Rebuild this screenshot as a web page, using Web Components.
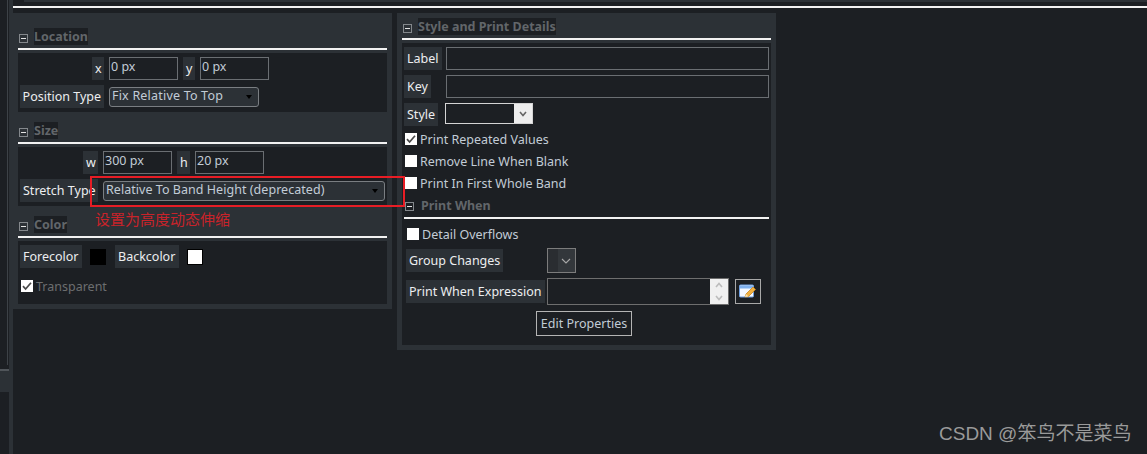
<!DOCTYPE html>
<html lang="en">
<head>
<meta charset="utf-8">
<title>Element properties</title>
<style>
html, body { margin: 0; padding: 0; height: 100%; background: #1c1f23; overflow: hidden; }
</style>
</head>
<body>
<props-page>
  <props-panel style="height:296px;width:379px;padding-top:15px">
    <props-section heading="Location">
      <field-row lead="84px">
        <field-label slot="lead" style="width:12px">x</field-label>
        <text-box value="0 px"></text-box>
        <field-label style="width:12px">y</field-label>
        <text-box value="0 px"></text-box>
      </field-row>
      <field-row lead="84px">
        <field-label slot="lead">Position Type</field-label>
        <drop-box value="Fix Relative To Top" style="width:150px;letter-spacing:0.2px"></drop-box>
      </field-row>
    </props-section>
    <props-section heading="Size" style="margin-top:10px">
      <field-row lead="78px">
        <field-label slot="lead" style="width:15px">w</field-label>
        <text-box value="300 px"></text-box>
        <field-label style="width:13px">h</field-label>
        <text-box value="20 px"></text-box>
      </field-row>
      <field-row lead="78px">
        <field-label slot="lead" style="width:78px">Stretch Type</field-label>
        <drop-box value="Relative To Band Height (deprecated)" style="width:282px;letter-spacing:0.04px"></drop-box>
      </field-row>
    </props-section>
    <props-section heading="Color" style="margin-top:10px">
      <color-row></color-row>
    </props-section>
  </props-panel>
  <props-panel style="height:337px;width:379px;padding-top:5px">
    <props-section heading="Style and Print Details">
      <style-details></style-details>
    </props-section>
  </props-panel>
</props-page>

<script>
"use strict";

const UI_FONT = `"Noto Sans", "Liberation Sans", sans-serif`;

class PropsPage extends HTMLElement {
  constructor() {
    super();
    this.attachShadow({ mode: "open" }).innerHTML = `
<style>
:host {
    display: flex;
    position: relative;
    width: 1147px;
    height: 454px;
    overflow: hidden;
    background: #1c1f23;
    font: 12.5px ${UI_FONT};
}
.rail { display: flex; flex: none; width: 13px; }
.tabs { width: 9px; display: flex; flex-direction: column; }
.tabs .list { height: 365px; width: 8px; box-sizing: border-box; border-right: 1px solid #3d4247; }
.tabs .sep { margin-top: 4px; height: 2px; background: #50555a; }
.tabs .tab { height: 21px; background: #2c3136; }
.strip { width: 4px; background: #2c3136; }
.main { flex: 1; display: flex; flex-direction: column; }
.top { height: 13px; flex: none; box-sizing: border-box; padding-top: 6px; position: relative; }
.top hr { margin: 0; border: 0; height: 2px; background: #f2f2f2; }
.top::before { content: ""; position: absolute; left: 11px; right: 0; top: 0; height: 2px; background: #2c3136; }
.panels { display: flex; gap: 5px; align-items: flex-start; }
.box {
    position: absolute;
    left: 90px;
    top: 176px;
    width: 315px;
    height: 31px;
    box-sizing: border-box;
    border: 2px solid #e81d25;
}
.note {
    position: absolute;
    left: 95px;
    top: 209px;
    color: #c8232a;
    font: 15px/20px "Noto Sans CJK SC", sans-serif;
}
.mark {
    position: absolute;
    left: 939px;
    top: 421px;
    color: #9a9a9a;
    font: 19px/26px "Liberation Sans", "Noto Sans CJK SC", sans-serif;
    white-space: nowrap;
}
</style>
<div class="rail">
  <div class="tabs"><div class="list"></div><div class="sep"></div><div class="tab"></div></div>
  <div class="strip"></div>
</div>
<div class="main">
  <div class="top"><hr></div>
  <div class="panels"><slot></slot></div>
</div>
<div class="box"></div>
<div class="note">设置为高度动态伸缩</div>
<div class="mark">CSDN @笨鸟不是菜鸟</div>`;
  }
}
customElements.define("props-page", PropsPage);

//===================================================

class PropsPanel extends HTMLElement {
  constructor() {
    super();
    this.attachShadow({ mode: "open" }).innerHTML = `
<style>
:host {
    display: block;
    flex: none;
    box-sizing: border-box;
    background: #2c3136;
    padding: 0 5px 5px;
}
</style>
<slot></slot>`;
  }
}
customElements.define("props-panel", PropsPanel);

//===================================================

class SectionHead extends HTMLElement {
  constructor() {
    super();
    const plain = this.hasAttribute("plain");
    this.attachShadow({ mode: "open" }).innerHTML = `
<style>
:host { display: block; }
.head { display: flex; height: 17px; align-items: flex-end; padding-left: 1px; }
.toggle {
    width: 9px;
    height: 9px;
    box-sizing: border-box;
    border: 1px solid #84888c;
    margin: 0 ${plain ? 7 : 6}px ${plain ? 3 : 2}px 0;
    display: flex;
    align-items: center;
    justify-content: center;
}
.toggle::before { content: ""; width: 5px; height: 1px; background: #e4e4e4; }
.title {
    height: 17px;
    line-height: 18px;
    font-size: 12.5px;
    font-weight: bold;
    color: #62666a;
    background: ${plain ? "transparent" : "#1c1f23"};
    white-space: nowrap;
}
hr { margin: 3px 0 3px; border: 0; height: 2px; background: #f2f2f2; }
</style>
<div class="head"><span class="toggle"></span><span class="title">${this.getAttribute("heading")}</span></div>
<hr>`;
  }
}
customElements.define("section-head", SectionHead);

class PropsSection extends HTMLElement {
  constructor() {
    super();
    this.attachShadow({ mode: "open" }).innerHTML = `
<style>
:host { display: block; }
.body {
    background: #1c1f23;
    padding: 4px 2px;
    display: flex;
    flex-direction: column;
    gap: 5px;
}
</style>
<section-head heading="${this.getAttribute("heading")}"></section-head>
<div class="body"><slot></slot></div>`;
  }
}
customElements.define("props-section", PropsSection);

//===================================================

class FieldRow extends HTMLElement {
  constructor() {
    super();
    this.attachShadow({ mode: "open" }).innerHTML = `
<style>
:host { display: flex; gap: 5px; align-items: center; height: 23px; }
.lead { display: flex; justify-content: flex-end; flex: none; width: ${this.getAttribute("lead")}; }
</style>
<div class="lead"><slot name="lead"></slot></div>
<slot></slot>`;
  }
}
customElements.define("field-row", FieldRow);

class FieldLabel extends HTMLElement {
  constructor() {
    super();
    this.attachShadow({ mode: "open" }).innerHTML = `
<style>
:host {
    display: block;
    flex: none;
    box-sizing: border-box;
    height: 23px;
    line-height: 23px;
    padding: 0 3px;
    background: #2c3136;
    color: #eceef0;
    text-align: left;
    white-space: nowrap;
}
</style>
<slot></slot>`;
  }
}
customElements.define("field-label", FieldLabel);

class TextBox extends HTMLElement {
  constructor() {
    super();
    this.attachShadow({ mode: "open" }).innerHTML = `
<style>
:host {
    display: block;
    flex: none;
    box-sizing: border-box;
    width: 69px;
    height: 23px;
    line-height: 18px;
    border: 1px solid #6a6e72;
    padding: 0 1px;
    color: #c2ccd6;
    white-space: nowrap;
}
</style>${this.getAttribute("value") || ""}`;
  }
}
customElements.define("text-box", TextBox);

class DropBox extends HTMLElement {
  constructor() {
    super();
    this.attachShadow({ mode: "open" }).innerHTML = `
<style>
:host {
    display: block;
    flex: none;
    position: relative;
    box-sizing: border-box;
    height: 20px;
    line-height: 16px;
    background: #2c3136;
    border: 1px solid #7a7e82;
    border-radius: 3px;
    padding: 0 2px;
    color: #c2ccd6;
    white-space: nowrap;
}
:host::after {
    content: "";
    position: absolute;
    right: 6px;
    top: 7px;
    border: 3px solid transparent;
    border-top: 4px solid #000;
    border-bottom: 0;
}
</style>${this.getAttribute("value")}`;
  }
}
customElements.define("drop-box", DropBox);

class CheckLine extends HTMLElement {
  constructor() {
    super();
    const tick = this.hasAttribute("checked")
      ? `<svg width="12" height="12" viewBox="0 0 12 12"><path d="M2 6.2 L4.6 9 L10 2.8" fill="none" stroke="#4a4a4a" stroke-width="1.7"/></svg>`
      : "";
    this.attachShadow({ mode: "open" }).innerHTML = `
<style>
:host {
    display: flex;
    align-items: center;
    gap: 3px;
    height: 22px;
    color: ${this.hasAttribute("disabled") ? "#6c6e70" : "#c2ccd6"};
    white-space: nowrap;
}
.tick { width: 12px; height: 12px; flex: none; background: #fff; }
svg { display: block; }
</style>
<span class="tick">${tick}</span><slot></slot>`;
  }
}
customElements.define("check-line", CheckLine);

//===================================================

class ColorRow extends HTMLElement {
  constructor() {
    super();
    this.attachShadow({ mode: "open" }).innerHTML = `
<style>
:host { display: block; height: 55px; }
.row { display: flex; align-items: center; height: 23px; }
.swatch { width: 16px; height: 16px; box-sizing: border-box; flex: none; }
.black { background: #000; margin: 0 9px 0 8px; }
.white { background: #fff; border: 1px solid #000; margin-left: 8px; }
check-line { margin: 7px 0 0 1px; }
</style>
<div class="row">
  <field-label style="width:62px">Forecolor</field-label><span class="swatch black"></span>
  <field-label style="width:64px">Backcolor</field-label><span class="swatch white"></span>
</div>
<check-line checked disabled>Transparent</check-line>`;
  }
}
customElements.define("color-row", ColorRow);

//===================================================

class StyleDetails extends HTMLElement {
  constructor() {
    super();
    this.attachShadow({ mode: "open" }).innerHTML = `
<style>
:host { display: block; height: 294px; }
.rows { display: grid; grid-template-columns: 37px 323px; gap: 5px; justify-items: start; }
.wide { width: 323px; height: 23px; }
.style-box {
    width: 88px;
    height: 21px;
    box-sizing: border-box;
    margin-left: -1px;
    border: 1px solid #d4d4d4;
    display: flex;
    justify-content: flex-end;
}
.style-box span { width: 18px; background: #eee; display: flex; align-items: center; justify-content: center; }
.checks { margin: 2px 0 0 1px; }
.when { margin-top: 3px; }
.when check-line { margin-left: 3px; margin-top: 4px; margin-bottom: 3px; }
.grid2 { display: grid; margin-left: 2px; grid-template-columns: 136px 182px auto; column-gap: 5px; row-gap: 5px; align-items: center; justify-items: start; }
.group {
    width: 29px;
    height: 25px;
    box-sizing: border-box;
    border: 1px solid #7c7c7c;
    background: linear-gradient(to right, #2a2d31 10px, #33373b 10px);
    display: flex;
    align-items: center;
    justify-content: flex-end;
    padding-right: 4px;
}
.expr {
    width: 182px;
    height: 27px;
    box-sizing: border-box;
    border: 1px solid #6e6e6e;
    display: flex;
    justify-content: flex-end;
}
.spin { width: 18px; background: #f0f0f0; display: flex; flex-direction: column; align-items: center; justify-content: space-around; }
.pick {
    width: 26px;
    height: 25px;
    box-sizing: border-box;
    margin-left: 1px;
    border: 1px solid #a8a8a8;
    display: flex;
    align-items: center;
    justify-content: center;
}
.edit {
    display: block;
    box-sizing: border-box;
    width: 96px;
    height: 25px;
    line-height: 23px;
    margin: 6px 0 0 132px;
    border: 1px solid #b4b4b4;
    color: #c2ccd6;
    text-align: center;
    white-space: nowrap;
}
svg { display: block; }
</style>
<div class="rows">
  <field-label>Label</field-label><text-box class="wide"></text-box>
  <field-label>Key</field-label><text-box class="wide"></text-box>
  <field-label>Style</field-label>
  <div class="style-box"><span>
    <svg width="8" height="6" viewBox="0 0 8 6"><path d="M1 1 L4 4.5 L7 1" fill="none" stroke="#666" stroke-width="1.6"/></svg>
  </span></div>
</div>
<div class="checks">
  <check-line checked>Print Repeated Values</check-line>
  <check-line>Remove Line When Blank</check-line>
  <check-line>Print In First Whole Band</check-line>
</div>
<div class="when">
  <section-head heading="Print When" plain></section-head>
  <check-line>Detail Overflows</check-line>
  <div class="grid2">
    <field-label style="width:97px">Group Changes</field-label>
    <div class="group">
      <svg width="10" height="6" viewBox="0 0 10 6"><path d="M1 1 L5 5 L9 1" fill="none" stroke="#a8a8a8" stroke-width="1.1"/></svg>
    </div>
    <span></span>
    <field-label>Print When Expression</field-label>
    <div class="expr"><div class="spin">
      <svg width="8" height="6" viewBox="0 0 8 6"><path d="M1 5 L4 1.5 L7 5" fill="none" stroke="#bcbcbc" stroke-width="1.6"/></svg>
      <svg width="8" height="6" viewBox="0 0 8 6"><path d="M1 1 L4 4.5 L7 1" fill="none" stroke="#bcbcbc" stroke-width="1.6"/></svg>
    </div></div>
    <div class="pick">
      <svg width="18" height="16" viewBox="0 0 18 16">
        <rect x="0.5" y="1" width="14" height="12" rx="1" fill="#f4f8ff" stroke="#6f9fe0"/>
        <rect x="1" y="1.5" width="13" height="3" fill="#7fb0ee"/>
        <path d="M6 13 L7 10 L14 3 L16.5 5.5 L9.5 12.5 Z" fill="#f0b040" stroke="#c78420" stroke-width="0.8"/>
        <path d="M6 13 L7 10 L9.5 12.5 Z" fill="#f7e3b4"/>
      </svg>
    </div>
  </div>
  <span class="edit">Edit Properties</span>
</div>`;
  }
}
customElements.define("style-details", StyleDetails);
</script>
</body>
</html>
